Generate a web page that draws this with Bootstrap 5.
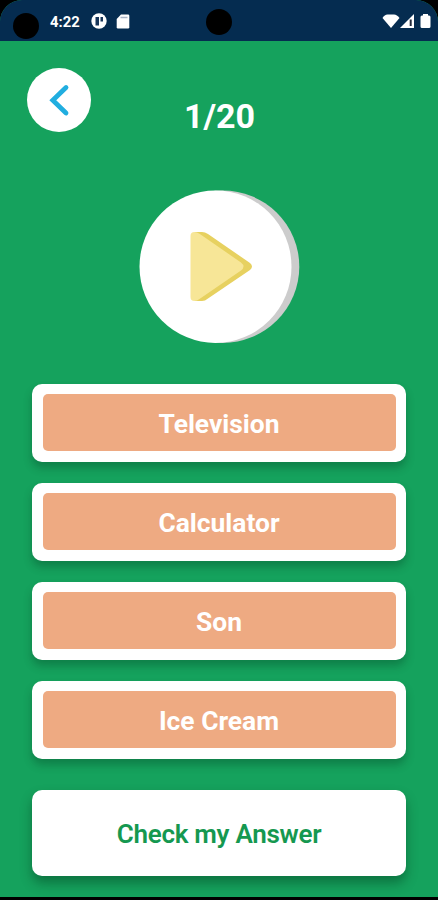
<!DOCTYPE html>
<html lang="en">
<head>
<meta charset="utf-8">
<meta name="viewport" content="width=device-width, initial-scale=1">
<title>Quiz</title>
<link href="https://cdn.jsdelivr.net/npm/bootstrap@5.3.0/dist/css/bootstrap.min.css" rel="stylesheet">
<style>
html,body{height:900px;overflow:hidden}
body{background:#000;font-family:Roboto,"Liberation Sans",sans-serif}
.screen{height:897px;background:#15a25d;border-radius:22px 22px 0 0}
.statusbar{height:41px;background:#052c50;padding:0 7px 0 13px}
.statusbar svg{display:block}
.lens{width:26px;height:26px;background:#000;margin-top:10px}
.lens-mid{position:absolute;left:206px;top:9px;width:26px;height:26px;background:#000}
.clock{font-size:14.800px;font-weight:700;line-height:20px;margin-left:11px;width:31px;margin-top:2px}
.quiz-head{display:grid;grid-template-columns:64px 1fr 64px;padding:27px 26px 0 27px;height:149px}
.back{width:64px;height:64px}
.count{font-size:34px;font-weight:700;line-height:40px;margin-top:28px}
.play{height:154px}
.answers{padding:40px 32px 0;gap:21px}
.answer{height:78px;padding:10px 10.500px 11.500px;border-radius:10px;box-shadow:0 6px 9px rgba(0,50,25,.3)}
.answer-face{background:#eeaa82;border-radius:5px;font-size:26.400px;font-weight:700;line-height:30px;padding-top:3px}
.check{height:86px;margin-top:10px;padding-top:9px;border-radius:10px;color:#159850;font-size:26px;font-weight:600;letter-spacing:-.28px;box-shadow:0 7px 12px rgba(0,50,25,.42)}
.check:hover{background:#fff;color:#159850}
</style>
<script src="https://cdn.jsdelivr.net/npm/bootstrap@5.3.0/dist/js/bootstrap.bundle.min.js"></script>
</head>
<body>
<div class="screen overflow-hidden position-relative">
  <header class="statusbar d-flex align-items-center text-white">
    <div class="lens rounded-circle"></div>
    <span class="clock text-nowrap">4:22</span>
    <svg class="ms-2 ps-0" width="54" height="20" viewBox="89 11 54 20">
      <circle cx="99" cy="21" r="7.700" fill="#fff"/>
      <path d="M95.500 17h3.500v8.500h-3.500z" fill="#173558"/>
      <path d="M100.500 17h2.500v4.500h-2.500z" fill="#173558"/>
      <path d="M121 14.500h7q1.300 0 1.300 1.300v11.400q0 1.300-1.300 1.300h-10q-1.300 0-1.300-1.300v-8.200z" fill="#fff"/>
      <path d="M120.500 17.500h7" stroke="#a9b4c6" stroke-width="1.600"/>
    </svg>
    <div class="lens-mid rounded-circle"></div>
    <svg class="ms-auto" width="50" height="20" viewBox="381 11 50 20">
      <path d="M382.500 18q2-3.500 5-3.500h6.500q3 0 5.500 3.500L391 28z" fill="#fff"/>
      <path d="M414 14v14h-14z" fill="#fff"/>
      <path d="M410.700 19.500v6.500" stroke="#222a3b" stroke-width="2"/>
      <path d="M423 14h5v1.500h1q1.500 0 1.500 1.500v9.500q0 1.500-1.500 1.500h-7q-1.500 0-1.500-1.500v-9.500q0-1.500 1.500-1.500h1z" fill="#fff"/>
    </svg>
  </header>
  <main class="d-flex flex-column">
    <div class="quiz-head">
      <button class="back btn bg-white rounded-circle border-0 p-0" aria-label="Back">
        <svg class="d-block" width="64" height="64" viewBox="0 0 64 64"><path d="M39 19.500L25.800 32.300L39 45" fill="none" stroke="#21aee0" stroke-width="4.800" stroke-linecap="round"/></svg>
      </button>
      <h1 class="count text-white text-center mb-0"><span>1/20</span></h1>
    </div>
    <button class="play btn border-0 p-0" aria-label="Play">
      <svg class="d-block mx-auto" width="162" height="154" viewBox="138 190 162 154">
        <ellipse cx="222.700" cy="266.700" rx="76.600" ry="76.200" fill="#ccc"/>
        <ellipse cx="215.500" cy="266.700" rx="76" ry="76.200" fill="#fff"/>
        <path d="M195 232h7q3 0 6 2l42 29q4 3.500 0 7l-42 28.500q-3 2.500-6 2.500h-7z" fill="#e7d160"/>
        <path d="M190.500 236q0-4 4-4 2.500 0 5 1.800L241 262.500q5 4 0 8L199.500 299q-2.500 2-5 2-4 0-4-4z" fill="#f7e697"/>
      </svg>
    </button>
    <div class="answers d-flex flex-column">
      <button class="answer btn bg-white border-0 d-flex"><span class="answer-face flex-fill align-self-stretch d-flex align-items-center justify-content-center text-white">Television</span></button>
      <button class="answer btn bg-white border-0 d-flex"><span class="answer-face flex-fill align-self-stretch d-flex align-items-center justify-content-center text-white">Calculator</span></button>
      <button class="answer btn bg-white border-0 d-flex"><span class="answer-face flex-fill align-self-stretch d-flex align-items-center justify-content-center text-white">Son</span></button>
      <button class="answer btn bg-white border-0 d-flex"><span class="answer-face flex-fill align-self-stretch d-flex align-items-center justify-content-center text-white">Ice Cream</span></button>
      <button class="check btn bg-white border-0">Check my Answer</button>
    </div>
  </main>
</div>
</body>
</html>
